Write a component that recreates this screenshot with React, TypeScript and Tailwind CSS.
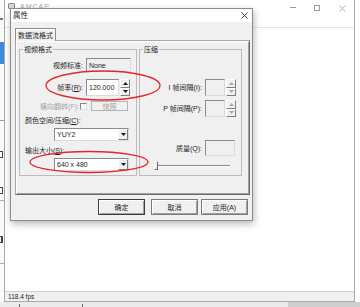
import React from 'react'

const raised =
  'border border-t-white border-l-white border-r-[#7e7e7e] border-b-[#7e7e7e] bg-[#f0f0f0]'
const sunken =
  'border border-t-[#8a8a8a] border-l-[#8a8a8a] border-r-[#dcdcdc] border-b-[#dcdcdc]'

function Arrow({ up = false, fill }: { up?: boolean; fill: string }) {
  return (
    <svg width="5" height="3" viewBox="0 0 5 3">
      <path d={up ? 'M2.5 0 5 3H0z' : 'M0 0h5L2.5 3z'} fill={fill} />
    </svg>
  )
}

function Spin({ disabled = false }: { disabled?: boolean }) {
  const fill = disabled ? '#a8a8a8' : '#1a1a1a'
  return (
    <div className="ml-[1px] flex h-full w-[10px] flex-col">
      <div className={`flex flex-1 items-center justify-center ${raised}`}>
        <Arrow up fill={fill} />
      </div>
      <div className={`flex flex-1 items-center justify-center ${raised}`}>
        <Arrow fill={fill} />
      </div>
    </div>
  )
}

function Combo({ value }: { value: string }) {
  return (
    <div className={`ml-[34px] flex h-[13px] w-[75px] items-center bg-white ${sunken}`}>
      <span className="flex-1 pl-[2px]">{value}</span>
      <div className={`flex h-full w-[10px] items-center justify-center ${raised}`}>
        <Arrow fill="#1a1a1a" />
      </div>
    </div>
  )
}

function Button({ label, def = false, className = '' }: { label: string; def?: boolean; className?: string }) {
  return (
    <div
      className={`flex h-[16px] w-[47px] items-center justify-center border bg-[#f0f0f0] shadow-[inset_1px_1px_0_#fff,inset_-1px_-1px_0_#a0a0a0] ${
        def ? 'border-[#3c3c3c]' : 'border-[#7a7a7a]'
      } ${className}`}
    >
      {label}
    </div>
  )
}

function VideoGroup() {
  return (
    <fieldset className="h-[131px] w-[118px] shrink-0 border border-[#bcbcbc]">
      <legend className="ml-[3px] px-[1px]">视频格式</legend>
      <div className="flex flex-col">
        <div className="mt-[4px] flex h-[14px] items-center">
          <span className="w-[63px] text-right">视频标准:</span>
          <div className={`ml-[3px] flex h-full w-[45px] items-center bg-[#f0f0f0] pl-[2px] ${sunken}`}>None</div>
        </div>
        <div className="mt-[7px] flex h-[17px] items-center">
          <span className="w-[63px] text-right">
            帧率(<span className="underline">R</span>):
          </span>
          <div className={`ml-[3px] flex h-full w-[33px] items-center bg-white pl-[2px] ${sunken}`}>120.000</div>
          <Spin />
        </div>
        <div className="mt-[5px] flex h-[10px] items-center text-[#a6a6a6]">
          <span className="w-[59px] text-right">横向翻转(F):</span>
          <div className="ml-[1px] h-[7px] w-[7px] border border-t-[#8a8a8a] border-l-[#8a8a8a] border-r-[#e0e0e0] border-b-[#e0e0e0] bg-[#f7f7f7]" />
          <div className="ml-[4px] flex h-full w-[37px] items-center justify-center border border-[#b4b4b4] bg-[#f0f0f0]">
            快照
          </div>
        </div>
        <div className="mt-[5px] ml-[5px] h-[9px]">
          颜色空间/压缩(<span className="underline">C</span>):
        </div>
        <div className="mt-[3px]">
          <Combo value="YUY2" />
        </div>
        <div className="mt-[5px] ml-[5px] h-[9px]">
          输出大小(<span className="underline">S</span>):
        </div>
        <div className="mt-[3px]">
          <Combo value="640 x 480" />
        </div>
      </div>
    </fieldset>
  )
}

function CompressionGroup() {
  return (
    <fieldset className="ml-[2px] h-[131px] w-[103px] shrink-0 border border-[#bcbcbc]">
      <legend className="ml-[3px] px-[1px]">压缩</legend>
      <div className="flex flex-col">
        <div className="mt-[25px] flex h-[17px] items-center">
          <span className="w-[62px] text-right">I 帧间隔(I):</span>
          <div className={`ml-[3px] h-full w-[20px] bg-[#f0f0f0] ${sunken}`} />
          <Spin disabled />
        </div>
        <div className="mt-[4px] flex h-[17px] items-center">
          <span className="w-[62px] text-right">P 帧间隔(P):</span>
          <div className={`ml-[3px] h-full w-[20px] bg-[#f0f0f0] ${sunken}`} />
          <Spin disabled />
        </div>
        <div className="mt-[23px] flex h-[16px] items-center">
          <span className="w-[62px] text-right">质量(Q):</span>
          <div className={`ml-[3px] h-full w-[30px] bg-[#f0f0f0] ${sunken}`} />
        </div>
        <div className="mt-[5px] ml-[14px] flex h-[9px] items-center">
          <div className="h-full w-[4px] border border-t-white border-l-white border-r-[#6a6a6a] border-b-[#6a6a6a] bg-[#f0f0f0]" />
          <div className="h-[2px] w-[72px] border-t border-b border-t-[#8a8a8a] border-b-white" />
        </div>
      </div>
    </fieldset>
  )
}

function Dialog() {
  return (
    <div className="absolute left-[10px] top-[8px] flex h-[213px] w-[243px] flex-col border border-[#8c8c8c] bg-[#f0f0f0] shadow-[1px_3px_7px_rgba(0,0,0,0.28)]">
      <div className="flex h-[13px] items-center bg-white pl-[2px] pr-[4px]">
        <span className="flex-1 text-[7.5px]">属性</span>
        <svg width="7" height="7" viewBox="0 0 7 7">
          <path d="M0.5 0.5l6 6M6.5 0.5l-6 6" stroke="#2a2a2a" strokeWidth="0.9" />
        </svg>
      </div>
      <div className="flex flex-1 flex-col pl-[4px] pt-[6px]">
        <div className="flex">
          <div className="relative z-10 -mb-[1px] flex h-[13px] w-[41px] items-center justify-center border border-b-0 border-[#8e8e8e] bg-[#f0f0f0] shadow-[inset_1px_1px_0_#fff]">
            数据流格式
          </div>
        </div>
        <div className="flex h-[155px] w-[235px] border border-t-[#a8a8a8] border-l-[#a8a8a8] border-r-[#6a6a6a] border-b-[#6a6a6a] pl-[3px] pt-[4px] shadow-[inset_1px_1px_0_#fff,inset_-1px_-1px_0_#a0a0a0]">
          <VideoGroup />
          <CompressionGroup />
        </div>
        <div className="mt-[4px] flex justify-end pr-[4px]">
          <Button label="确定" def className="mr-[6px]" />
          <Button label="取消" className="mr-[3px]" />
          <Button label="应用(A)" />
        </div>
      </div>
    </div>
  )
}

function MainWindow() {
  return (
    <div className="absolute left-[4px] top-0 flex h-[302px] w-[351px] flex-col border-l border-r border-b border-[#a9a9a9] bg-white">
      <div className="flex h-[17px] items-start pt-[2px]">
        <div className="ml-[3px] mt-[1px] h-[6px] w-[7px] rounded-[1px] border border-[#8a8a8a] bg-[#d8d8d8]" />
        <span className="ml-[5px] text-[7px] tracking-[1px] text-[#a8a8a8]">AMCAP</span>
        <div className="flex-1" />
        <div className="mt-[5px] mr-[18px] h-[1px] w-[6px] bg-[#9a9a9a]" />
        <div className="mt-[3px] mr-[19px] h-[6px] w-[6px] border border-[#9a9a9a]" />
        <svg className="mr-[8px] mt-[3px]" width="7" height="7" viewBox="0 0 7 7">
          <path d="M0.5 0.5l6 6M6.5 0.5l-6 6" stroke="#9a9a9a" strokeWidth="0.8" />
        </svg>
      </div>
      <div className="h-[11px] border-b border-[#e6e6e6]" />
      <div className="flex-1" />
      <div className="flex h-[10px] items-center border-t border-[#cfcfcf] bg-[#f0f0f0] pl-[3px] text-[6.5px]">
        118.4 fps
      </div>
    </div>
  )
}

export default function App() {
  return (
    <div className="relative h-[307px] w-[360px] overflow-hidden bg-[#ebebeb] font-['Liberation_Sans','Noto_Sans_CJK_SC',sans-serif] text-[7px] leading-[9px] text-[#1e1e1e]">
      {/* window behind, left edge */}
      <div className="absolute left-0 top-0 h-[302px] w-[4px] bg-[#fafafa]">
        <div className="absolute left-0 top-[18px] h-[2px] w-[3px] bg-[#777]" />
        <div className="absolute left-0 top-[42px] h-[22px] w-[4px] bg-[#3d8bd9]" />
        <div className="absolute left-0 top-[120px] h-[1px] w-[4px] bg-[#9a9a9a]" />
        <div className="absolute left-0 top-[151px] h-[7px] w-[3px] border-r border-t border-b border-[#444]" />
        <div className="absolute left-0 top-[187px] h-[7px] w-[3px] border-r border-t border-b border-[#444]" />
        <div className="absolute left-0 top-[200px] h-[1px] w-[4px] bg-[#b0b0b0]" />
        <div className="absolute left-0 top-[236px] h-[7px] w-[3px] border-r-2 border-t border-b border-[#444]" />
        <div className="absolute left-0 top-[263px] h-[1px] w-[4px] bg-[#b0b0b0]" />
      </div>
      <div className="absolute left-[288px] top-[302px] h-[5px] w-[72px] bg-[#cfcfcf]" />
      <div className="absolute left-[19px] top-[304px] h-[3px] w-[1px] bg-[#666]" />
      <div className="absolute left-[82px] top-[304px] h-[3px] w-[1px] bg-[#666]" />
      <div className="absolute left-[355px] top-0 h-[302px] w-[5px] bg-white" />

      <MainWindow />
      <Dialog />

      <svg className="pointer-events-none absolute left-0 top-0" width="360" height="307">
        <ellipse cx="103" cy="85.5" rx="57" ry="14.5" fill="none" stroke="#e3262b" strokeWidth="1.3" />
        <ellipse cx="89" cy="162" rx="59" ry="10.5" fill="none" stroke="#e3262b" strokeWidth="1.3" />
      </svg>
    </div>
  )
}
